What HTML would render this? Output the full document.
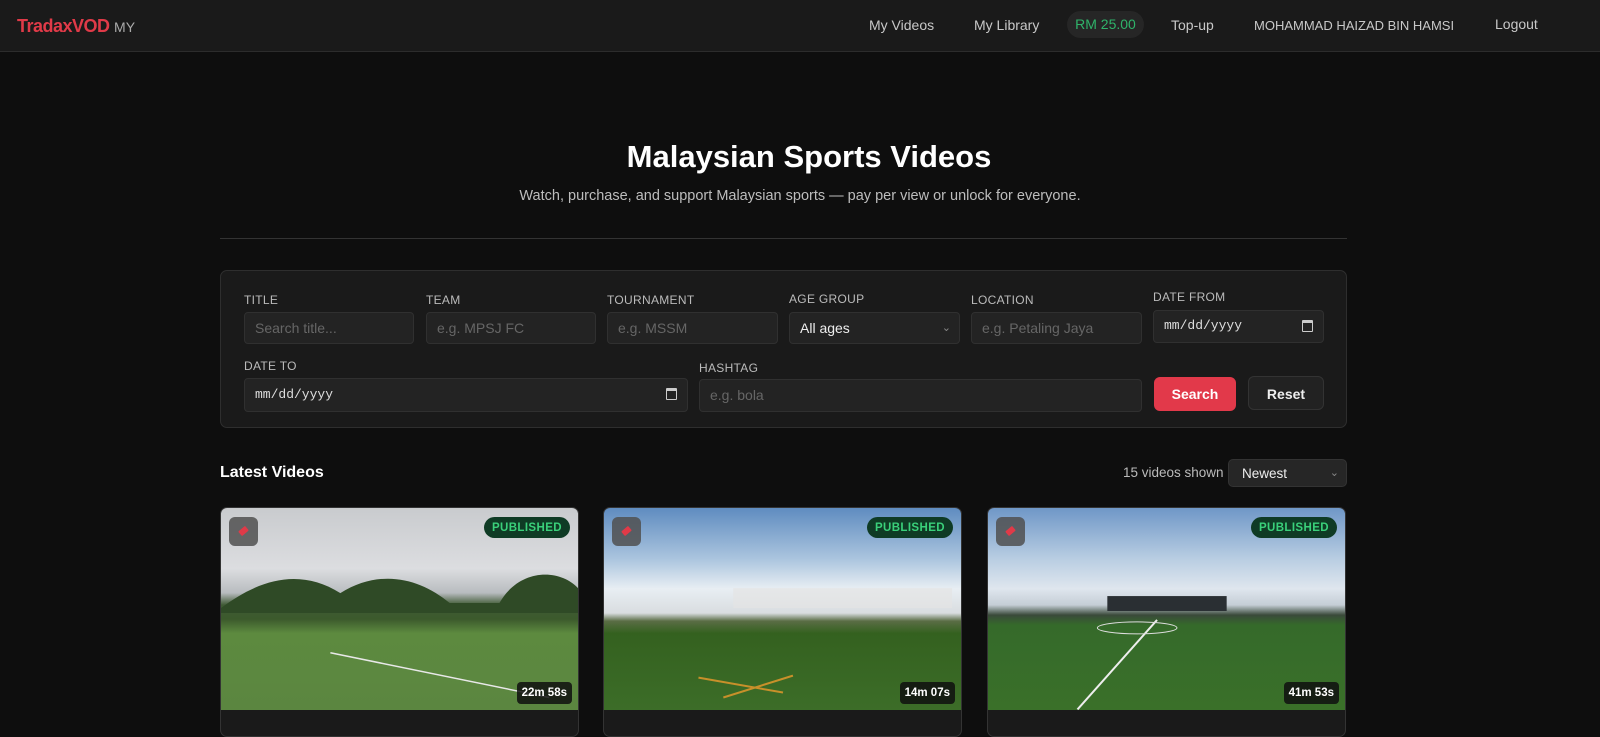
<!DOCTYPE html>
<html><head><meta charset="utf-8"><style>
*{box-sizing:border-box;margin:0;padding:0}
body{width:1600px;height:728px;overflow:hidden;background:#0e0e0e;font-family:"Liberation Sans",sans-serif;color:#ddd;position:relative}
.nav{position:absolute;left:0;top:0;width:1600px;height:52px;background:#1a1a1a;border-bottom:1px solid #2c2c2c}
.logo{position:absolute;left:17px;top:16px;font-size:18px;font-weight:bold;color:#e03a48;letter-spacing:-0.5px}
.logo span{font-size:14px;font-weight:normal;color:#aaa;letter-spacing:0}
.nl{position:absolute;top:17px;font-size:14px;color:#c8c8c8}
.bal{position:absolute;left:1067px;top:11px;width:77px;height:27px;border-radius:14px;background:#262626;color:#2fb36a;font-size:14px;text-align:center;line-height:27px}
h1{position:absolute;top:139px;width:100%;text-align:center;font-size:31px;color:#fff;font-weight:bold;padding-left:18px}
.sub{position:absolute;top:188px;width:100%;text-align:center;font-size:14.5px;color:#bdbdbd}
.hr{position:absolute;left:220px;top:238px;width:1127px;height:1px;background:#333}
.panel{position:absolute;left:220px;top:270px;width:1127px;height:158px;background:#1a1a1a;border:1px solid #2e2e2e;border-radius:7px}
.lb{position:absolute;font-size:12px;color:#bbb;letter-spacing:.3px}
.in{position:absolute;height:32px;background:#232323;border:1px solid #303030;border-radius:4px;font-size:14px;color:#666;padding-left:10px;line-height:30px}
.date{color:#ddd;font-family:"Liberation Mono",monospace;font-size:13px}
.cal{position:absolute;right:10px;top:9px;width:11px;height:12px;border:1.5px solid #ccc;border-top-width:3px;border-radius:1px}
.btn{position:absolute;height:34px;border-radius:6px;font-size:14px;font-weight:bold;text-align:center;line-height:34px}
.card{position:absolute;top:507px;width:359px;height:230px;border-radius:7px;overflow:hidden;border:1px solid #333;background:#1a1a1a}
.th{position:absolute;left:0;top:0;width:100%;height:202px}
.pub{position:absolute;right:8px;top:9px;height:21px;padding:0 8px;border-radius:11px;background:#0f3b25;color:#3ad07a;font-size:11.5px;font-weight:bold;line-height:22px;letter-spacing:.4px}
.ic{position:absolute;left:8px;top:9px;width:29px;height:29px;border-radius:6px;background:rgba(80,80,80,.85)}
.ic:after{content:"";position:absolute;left:10px;top:11px;width:9px;height:6px;background:#e03a48;transform:rotate(-40deg);border-radius:1px}
.dur{position:absolute;right:6px;top:174px;height:22px;padding:0 5px;border-radius:4px;background:rgba(15,15,15,.85);color:#fff;font-size:11.5px;font-weight:bold;line-height:22px}
</style></head><body>
<div class="nav">
<div class="logo">TradaxVOD <span>MY</span></div>
<div class="nl" style="left:869px">My Videos</div>
<div class="nl" style="left:974px">My Library</div>
<div class="bal">RM 25.00</div>
<div class="nl" style="left:1171px">Top-up</div>
<div class="nl" style="left:1254px;font-size:13px;top:18px">MOHAMMAD HAIZAD BIN HAMSI</div>
<div class="nl" style="left:1495px;top:16px">Logout</div>
</div>
<h1>Malaysian Sports Videos</h1>
<div class="sub">Watch, purchase, and support Malaysian sports — pay per view or unlock for everyone.</div>
<div class="hr"></div>
<div class="panel">
<div class="lb" style="left:23px;top:22px">TITLE</div>
<div class="in" style="left:23px;top:41px;width:170px">Search title...</div>
<div class="lb" style="left:205px;top:22px">TEAM</div>
<div class="in" style="left:205px;top:41px;width:170px">e.g. MPSJ FC</div>
<div class="lb" style="left:386px;top:22px">TOURNAMENT</div>
<div class="in" style="left:386px;top:41px;width:171px">e.g. MSSM</div>
<div class="lb" style="left:568px;top:21px">AGE GROUP</div>
<div class="in" style="left:568px;top:41px;width:171px;color:#eee">All ages<span style="position:absolute;right:8px;color:#888;font-size:11px">⌄</span></div>
<div class="lb" style="left:750px;top:22px">LOCATION</div>
<div class="in" style="left:750px;top:41px;width:171px">e.g. Petaling Jaya</div>
<div class="lb" style="left:932px;top:19px">DATE FROM</div>
<div class="in date" style="left:932px;top:39px;width:171px;height:33px">mm/dd/yyyy<div class="cal"></div></div>
<div class="lb" style="left:23px;top:88px">DATE TO</div>
<div class="in date" style="left:23px;top:107px;width:444px;height:34px;line-height:32px">mm/dd/yyyy<div class="cal"></div></div>
<div class="lb" style="left:478px;top:90px">HASHTAG</div>
<div class="in" style="left:478px;top:108px;width:443px;height:33px">e.g. bola</div>
<div class="btn" style="left:933px;top:106px;width:82px;background:#e2394a;color:#fff">Search</div>
<div class="btn" style="left:1027px;top:105px;width:76px;background:#222;border:1px solid #333;color:#eee">Reset</div>
</div>
<div style="position:absolute;left:220px;top:464px;font-size:16px;font-weight:bold;color:#fff">Latest Videos</div>
<div style="position:absolute;left:1123px;top:465px;font-size:13.5px;color:#bbb">15 videos shown</div>
<div style="position:absolute;left:1228px;top:459px;width:119px;height:28px;background:#262626;border:1px solid #333;border-radius:5px;font-size:13.5px;color:#eee;padding:6px 13px">Newest<span style="position:absolute;right:7px;color:#888;font-size:11px">⌄</span></div>

<div class="card" style="left:220px"><div class="th" style="background:linear-gradient(#c9cbce 0%,#dcdde0 30%,#b8bcbf 42%,#3f5a35 48%,#3c5a2c 55%,#5d8a3f 62%,#5b8640 100%)"></div>
<svg class="th" viewBox="0 0 359 202"><path d="M0 100 C40 70 80 60 120 85 C160 60 200 70 230 95 L280 95 C300 60 340 60 359 80 L359 105 L0 105Z" fill="#2f4a26"/><path d="M110 145 L330 190" stroke="#e8e8e8" stroke-width="1.5"/></svg>
<div class="ic"></div><div class="pub">PUBLISHED</div><div class="dur">22m 58s</div></div>
<div class="card" style="left:603px"><div class="th" style="background:linear-gradient(#5f8cc0 0%,#aac4de 25%,#e8eef3 40%,#d9dde0 52%,#5a6d45 56%,#34611f 62%,#3c6d28 100%)"></div>
<svg class="th" viewBox="0 0 359 202"><path d="M95 170 L180 185 M120 190 L190 168" stroke="#c8902a" stroke-width="2"/><path d="M130 100 L350 100 L350 80 L130 80Z" fill="#e4e4e4" opacity=".7"/></svg>
<div class="ic"></div><div class="pub">PUBLISHED</div><div class="dur">14m 07s</div></div>
<div class="card" style="left:987px"><div class="th" style="background:linear-gradient(#6f97c7 0%,#b8cde2 25%,#dfe6ee 40%,#c5ced6 48%,#3a4a3a 53%,#356a2a 58%,#3a7029 100%)"></div>
<svg class="th" viewBox="0 0 359 202"><path d="M170 112 L90 202" stroke="#eee" stroke-width="2"/><ellipse cx="150" cy="120" rx="40" ry="6" fill="none" stroke="#ddd"/><rect x="120" y="88" width="120" height="15" fill="#2a2f33"/></svg>
<div class="ic"></div><div class="pub">PUBLISHED</div><div class="dur">41m 53s</div></div>
</body></html>
